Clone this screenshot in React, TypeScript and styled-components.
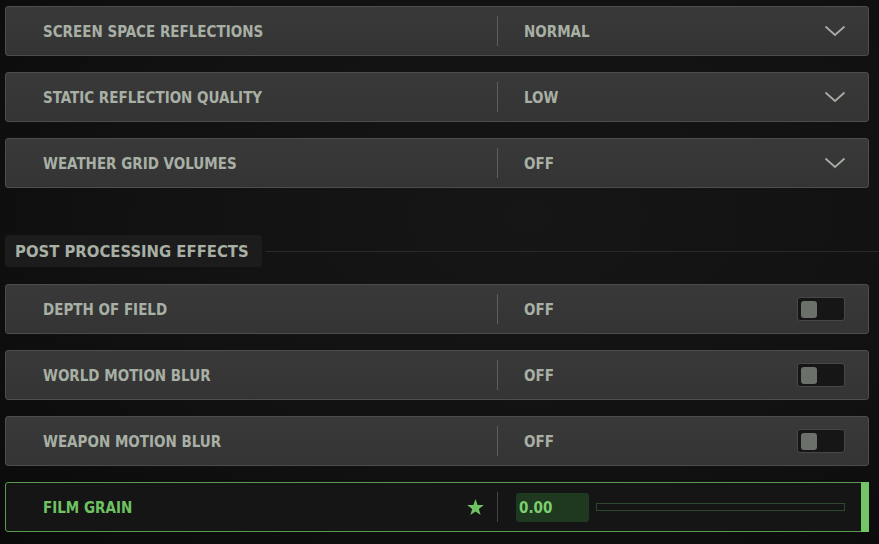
import React from "react";
import styled, { createGlobalStyle } from "styled-components";

const GlobalStyle = createGlobalStyle`
  html, body {
    margin: 0;
    padding: 0;
    background: #0d0d0d;
  }
  body {
    font-family: "DejaVu Sans Condensed", "DejaVu Sans", sans-serif;
  }
`;

type Setting =
    | { kind: "select"; label: string; value: string }
    | { kind: "toggle"; label: string; value: string };

const graphics: Setting[] = [
    { kind: "select", label: "SCREEN SPACE REFLECTIONS", value: "NORMAL" },
    { kind: "select", label: "STATIC REFLECTION QUALITY", value: "LOW" },
    { kind: "select", label: "WEATHER GRID VOLUMES", value: "OFF" },
];

const postFx: Setting[] = [
    { kind: "toggle", label: "DEPTH OF FIELD", value: "OFF" },
    { kind: "toggle", label: "WORLD MOTION BLUR", value: "OFF" },
    { kind: "toggle", label: "WEAPON MOTION BLUR", value: "OFF" },
];

const Chevron = () => (
    <svg width="22" height="12" viewBox="0 0 22 12" fill="none">
        <path d="M1.5 1.5 L11 10 L20.5 1.5" stroke="#a6ada3" strokeWidth="1.8" />
    </svg>
);

const Star = () => (
    <svg width="17" height="16" viewBox="0 0 24 23">
        <path d="M12 0 L15 8.5 L24 8.7 L16.8 14.2 L19.4 23 L12 17.8 L4.6 23 L7.2 14.2 L0 8.7 L9 8.5 Z" fill="#6fc262" />
    </svg>
);

export default function App() {
    return (
        <Page>
            <GlobalStyle />
            <List>
                {graphics.map((s) => (
                    <SettingRow key={s.label} setting={s} />
                ))}
            </List>
            <SectionHeader>
                <SectionTitle>POST PROCESSING EFFECTS</SectionTitle>
                <SectionLine />
            </SectionHeader>
            <List>
                {postFx.map((s) => (
                    <SettingRow key={s.label} setting={s} />
                ))}
                <Row $active>
                    <Label $active $width={424}>FILM GRAIN</Label>
                    <StarSlot><Star /></StarSlot>
                    <Divider $active $gap={13} />
                    <SliderArea>
                        <NumberBox>0.00</NumberBox>
                        <Track />
                    </SliderArea>
                    <ActiveBar />
                </Row>
            </List>
        </Page>
    );
}

function SettingRow({ setting }: { setting: Setting }) {
    return (
        <Row>
            <Label $width={418}>{setting.label}</Label>
            <Divider $gap={36} />
            <Value>{setting.value}</Value>
            {setting.kind === "select" ? (
                <ChevronSlot><Chevron /></ChevronSlot>
            ) : (
                <Toggle><Knob /></Toggle>
            )}
        </Row>
    );
}

const Page = styled.div`
    width: 879px;
    height: 544px;
    box-sizing: border-box;
    padding: 6px 10px 0 5px;
    overflow: hidden;
    background: radial-gradient(ellipse at 60% 40%, #161616 0%, #111111 55%, #0a0a0a 100%);
`;

const List = styled.div`
    display: flex;
    flex-direction: column;
    gap: 16px;
`;

const Row = styled.div<{ $active?: boolean }>`
    position: relative;
    height: 50px;
    box-sizing: border-box;
    display: flex;
    align-items: center;
    border: 1px solid ${(p) => (p.$active ? "#5b9852" : "#4d4d4d")};
    border-radius: 3px;
    background: ${(p) => (p.$active ? "#151515" : "linear-gradient(180deg, #393939 0%, #343434 100%)")};
    padding-left: 37px;
`;

const Label = styled.div<{ $active?: boolean; $width: number }>`
    flex: 0 0 ${(p) => p.$width}px;
    padding-top: 2px;
    font-size: 15px;
    font-weight: bold;
    letter-spacing: 0;
    color: ${(p) => (p.$active ? "#6fc262" : "#a8b0a5")};
`;

const Divider = styled.div<{ $active?: boolean; $gap: number }>`
    width: 1px;
    height: 30px;
    background: ${(p) => (p.$active ? "#3f4a3d" : "#5e5e5e")};
    margin-left: ${(p) => p.$gap}px;
`;

const Value = styled.div`
    flex: 1;
    padding-left: 26px;
    padding-top: 2px;
    font-size: 15px;
    font-weight: bold;
    color: #a8b0a5;
`;

const ChevronSlot = styled.div`
    display: flex;
    width: 22px;
    margin-right: 22px;
`;

const Toggle = styled.div`
    width: 48px;
    height: 24px;
    box-sizing: border-box;
    border: 1px solid #474747;
    border-radius: 3px;
    background: #161616;
    margin-right: 23px;
    display: flex;
    align-items: center;
    padding-left: 3px;
`;

const Knob = styled.div`
    width: 16px;
    height: 17px;
    border-radius: 3px;
    background: #6b706a;
`;

const StarSlot = styled.div`
    display: flex;
`;

const SliderArea = styled.div`
    flex: 1;
    display: flex;
    align-items: center;
    padding-left: 18px;
    gap: 7px;
    padding-right: 23px;
`;

const NumberBox = styled.div`
    width: 73px;
    height: 29px;
    box-sizing: border-box;
    border-radius: 3px;
    background: #1f3921;
    color: #7ccf6e;
    font-size: 15px;
    font-weight: bold;
    display: flex;
    align-items: center;
    padding: 2px 0 0 3px;
`;

const Track = styled.div`
    flex: 1;
    height: 8px;
    box-sizing: border-box;
    border: 1px solid #2c4a2b;
`;

const ActiveBar = styled.div`
    position: absolute;
    right: -1px;
    top: -1px;
    bottom: -1px;
    width: 8px;
    background: #73c567;
`;

const SectionHeader = styled.div`
    display: flex;
    align-items: center;
    margin: 47px 0 17px;
`;

const SectionTitle = styled.div`
    width: 257px;
    height: 32px;
    box-sizing: border-box;
    display: flex;
    align-items: center;
    padding: 1px 0 0 10px;
    border-radius: 3px;
    background: #1c1c1c;
    color: #a8b0a5;
    font-size: 16.5px;
    font-weight: bold;
    letter-spacing: 0;
`;

const SectionLine = styled.div`
    flex: 1;
    height: 1px;
    margin-left: 4px;
    margin-right: -10px;
    background: #2a2a2a;
`;
